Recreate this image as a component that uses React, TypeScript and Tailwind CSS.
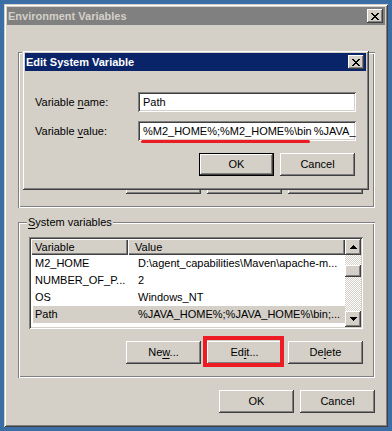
import React from "react";

const frame =
  "shadow-[inset_1px_1px_0_#d4d0c8,inset_-1px_-1px_0_#404040,inset_2px_2px_0_#fff,inset_-2px_-2px_0_#808080]";
const raised =
  "shadow-[inset_-1px_-1px_0_#404040,inset_1px_1px_0_#fff,inset_-2px_-2px_0_#808080,inset_2px_2px_0_#d4d0c8]";
const defRaised =
  "shadow-[inset_0_0_0_1px_#000,inset_-2px_-2px_0_#404040,inset_2px_2px_0_#fff,inset_-3px_-3px_0_#808080,inset_3px_3px_0_#d4d0c8]";
const sunken =
  "shadow-[inset_1px_1px_0_#808080,inset_-1px_-1px_0_#fff,inset_2px_2px_0_#404040,inset_-2px_-2px_0_#d4d0c8]";
const etched =
  "shadow-[inset_1px_1px_0_#808080,inset_-1px_-1px_0_#fff,inset_2px_2px_0_#fff,inset_-2px_-2px_0_#808080]";
const headerCell =
  "shadow-[inset_1px_1px_0_#fff,inset_-1px_-1px_0_#404040,inset_-2px_-2px_0_#808080]";

function CloseBtn() {
  return (
    <div className={"w-[16px] h-[14px] bg-[#d4d0c8] flex items-center justify-center " + raised}>
      <svg width="8" height="7" viewBox="0 0 8 7" shapeRendering="crispEdges">
        <path d="M0 0h2v1h-2zM6 0h2v1h-2zM1 1h2v1h-2zM5 1h2v1h-2zM2 2h4v1h-4zM3 3h2v1h-2zM2 4h4v1h-4zM1 5h2v1h-2zM5 5h2v1h-2zM0 6h2v1h-2zM6 6h2v1h-2z" fill="#000" />
      </svg>
    </div>
  );
}

function Btn({ children, def = false }: { children: React.ReactNode; def?: boolean }) {
  return (
    <div
      className={
        "w-[75px] h-[23px] bg-[#d4d0c8] flex items-center justify-center text-black " +
        (def ? defRaised : raised)
      }
    >
      <span>{children}</span>
    </div>
  );
}

function U({ children }: { children: React.ReactNode }) {
  return <span className="underline underline-offset-[2px]">{children}</span>;
}

function Arrow({ up }: { up: boolean }) {
  return (
    <svg width="7" height="4" viewBox="0 0 7 4" shapeRendering="crispEdges">
      {up ? <polygon points="3.5,0 7,4 0,4" fill="#000" /> : <polygon points="0,0 7,0 3.5,4" fill="#000" />}
    </svg>
  );
}

const rows = [
  { v: "M2_HOME", val: "D:\\agent_capabilities\\Maven\\apache-m...", sel: false },
  { v: "NUMBER_OF_P...", val: "2", sel: false },
  { v: "OS", val: "Windows_NT", sel: false },
  { v: "Path", val: "%JAVA_HOME%;%JAVA_HOME%\\bin;...", sel: true },
];

function ListView({ showRows }: { showRows: boolean }) {
  return (
    <div className={"w-[334px] h-[92px] bg-white p-[2px] flex " + sunken}>
      <div className="flex-1 flex flex-col min-w-0 overflow-hidden">
        <div className="h-[16px] flex shrink-0">
          <div className={"w-[97px] h-full bg-[#d4d0c8] pl-[4px] flex items-center " + headerCell}>Variable</div>
          <div className={"flex-1 h-full bg-[#d4d0c8] pl-[7px] flex items-center " + headerCell}>Value</div>
        </div>
        {showRows &&
          rows.map((r) => (
            <div
              key={r.v}
              className={"h-[17px] ml-[2px] flex items-center whitespace-nowrap " + (r.sel ? "bg-[#d4d0c8]" : "")}
            >
              <div className="w-[95px] pl-[2px]">{r.v}</div>
              <div className="pl-[10px]">{r.val}</div>
            </div>
          ))}
      </div>
      <div className="w-[16px] flex flex-col">
        <div className={"h-[16px] bg-[#d4d0c8] flex items-center justify-center " + raised}>
          <Arrow up />
        </div>
        <div className="flex-1 bg-[repeating-conic-gradient(#d4d0c8_0%_25%,#ffffff_0%_50%)] bg-[length:2px_2px] flex flex-col">
          <div className={"mt-[10px] h-[12px] bg-[#d4d0c8] " + raised} />
        </div>
        <div className={"h-[16px] bg-[#d4d0c8] flex items-center justify-center " + raised}>
          <Arrow up={false} />
        </div>
      </div>
    </div>
  );
}

function Group({
  label,
  showRows,
  editMark,
  labelTop,
}: {
  label: React.ReactNode;
  showRows: boolean;
  editMark?: boolean;
  labelTop: string;
}) {
  return (
    <div className={"relative w-[357px] h-[156px] pt-[15px] pl-[11px] flex flex-col " + etched}>
      <div className={"absolute left-[9px] px-[1px] bg-[#d4d0c8] leading-[13px] whitespace-nowrap " + labelTop}>
        {label}
      </div>
      <ListView showRows={showRows} />
      <div className="mt-[12px] w-[334px] flex justify-end gap-[6px]">
        <Btn>
          Ne<U>w</U>...
        </Btn>
        <div className="relative">
          <Btn>
            Ed<U>i</U>t...
          </Btn>
          {editMark && (
            <div className="absolute left-[-4px] right-[-2px] top-[-5px] bottom-[-3px] border-[4px] border-[#ed1c24]" />
          )}
        </div>
        <Btn>
          De<U>l</U>ete
        </Btn>
      </div>
    </div>
  );
}

export default function App() {
  return (
    <div className="relative w-[392px] h-[431px] bg-[#3a6ea5] p-[4px] font-['Liberation_Sans',Arial,sans-serif] text-[11px] leading-[13px] text-black overflow-hidden">
      <div className={"w-[384px] h-[423px] bg-[#d4d0c8] p-[3px] flex flex-col " + frame}>
        <div className="h-[18px] bg-[#808080] pl-[1px] pr-[2px] flex items-center justify-between">
          <span className="font-bold text-[#d4d0c8]">Environment Variables</span>
          <CloseBtn />
        </div>
        <div className="mt-[27px] ml-[11px]">
          <Group
            label={<span>User variables for Administrator</span>}
            showRows={false}
            labelTop="top-[-3px]"
          />
        </div>
        <div className="mt-[14px] ml-[11px]">
          <Group
            label={
              <span>
                <U>S</U>ystem variables
              </span>
            }
            showRows
            editMark
            labelTop="top-[-6px]"
          />
        </div>
        <div className="mt-[12px] pr-[10px] flex justify-end gap-[6px]">
          <Btn>OK</Btn>
          <Btn>Cancel</Btn>
        </div>
      </div>

      <div className={"absolute left-[22px] top-[50px] w-[347px] h-[140px] bg-[#d4d0c8] p-[3px] flex flex-col " + frame}>
        <div className="h-[18px] bg-[#0a246a] pl-[1px] pr-[2px] flex items-center justify-between">
          <span className="font-bold text-white">Edit System Variable</span>
          <CloseBtn />
        </div>
        <div className="px-[10px] flex flex-col">
          <div className="mt-[21px] h-[20px] flex items-center">
            <div className="w-[103px]">
              Variable <U>n</U>ame:
            </div>
            <div className={"w-[218px] h-[20px] bg-white pl-[5px] flex items-center " + sunken}>Path</div>
          </div>
          <div className="mt-[9px] h-[20px] flex items-center">
            <div className="w-[103px]">
              Variable <U>v</U>alue:
            </div>
            <div className={"w-[218px] h-[20px] bg-white pl-[5px] pr-[3px] flex items-center overflow-hidden whitespace-nowrap " + sunken}>
              <span>%M2_HOME%;%M2_HOME%\bin</span>
              <span className="inline-block w-[2px] h-[13px] bg-black mx-[1px]" />
              <span>%JAVA_</span>
            </div>
          </div>
          <div className="mt-[12px] pr-[1px] flex justify-end gap-[6px]">
            <Btn def>OK</Btn>
            <Btn>Cancel</Btn>
          </div>
        </div>
      </div>

      <div className="absolute left-[141px] top-[140px] w-[169px] h-[3px] bg-[#ed1c24] rounded-full" />
    </div>
  );
}
